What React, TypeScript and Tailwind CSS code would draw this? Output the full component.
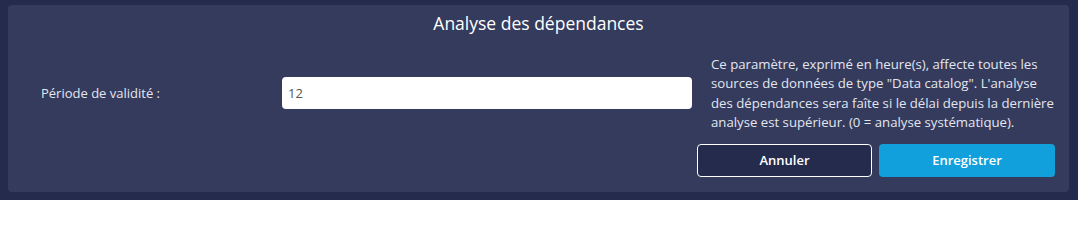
export default function App() {
  return (
    <div className="h-[200px] w-[1078px] bg-[#242b4c] pl-2 pt-[5px] font-['Open_Sans',sans-serif]">
      <div className="flex h-[187px] w-[1061px] flex-col rounded bg-[#343b5d]">
        {/* Header */}
        <h2 className="pt-[6px] text-center text-[17.5px] leading-6 text-white">Analyse des dépendances</h2>

        {/* Field row */}
        <div className="mt-5 flex items-start">
          <label className="mt-[28px] w-[274px] pl-[33px] text-[13px] leading-5 text-[#e3e6f0]">
            Période de validité :
          </label>
          <input
            type="text"
            defaultValue="12"
            className="mt-[22px] h-8 w-[410px] rounded bg-white px-[6px] text-[13px] text-[#555] outline-none"
          />
          <p className="ml-[19px] w-[344px] text-[13.2px] leading-[19.3px] text-[#e3e6f0]">
            Ce paramètre, exprimé en heure(s), affecte toutes les sources de données de type "Data catalog".
            L'analyse des dépendances sera faîte si le délai depuis la dernière analyse est supérieur. (0 =
            analyse systématique).
          </p>
        </div>

        {/* Actions */}
        <div className="mt-3 flex justify-end gap-[7px] pr-[14px]">
          <button className="h-[33px] w-[175px] rounded border border-white bg-[#242b4c] pt-px text-[13px] font-semibold text-white">
            Annuler
          </button>
          <button className="h-[33px] w-[176px] rounded bg-[#11a0db] pt-px text-[13px] font-semibold text-white">
            Enregistrer
          </button>
        </div>
      </div>
    </div>
  );
}
